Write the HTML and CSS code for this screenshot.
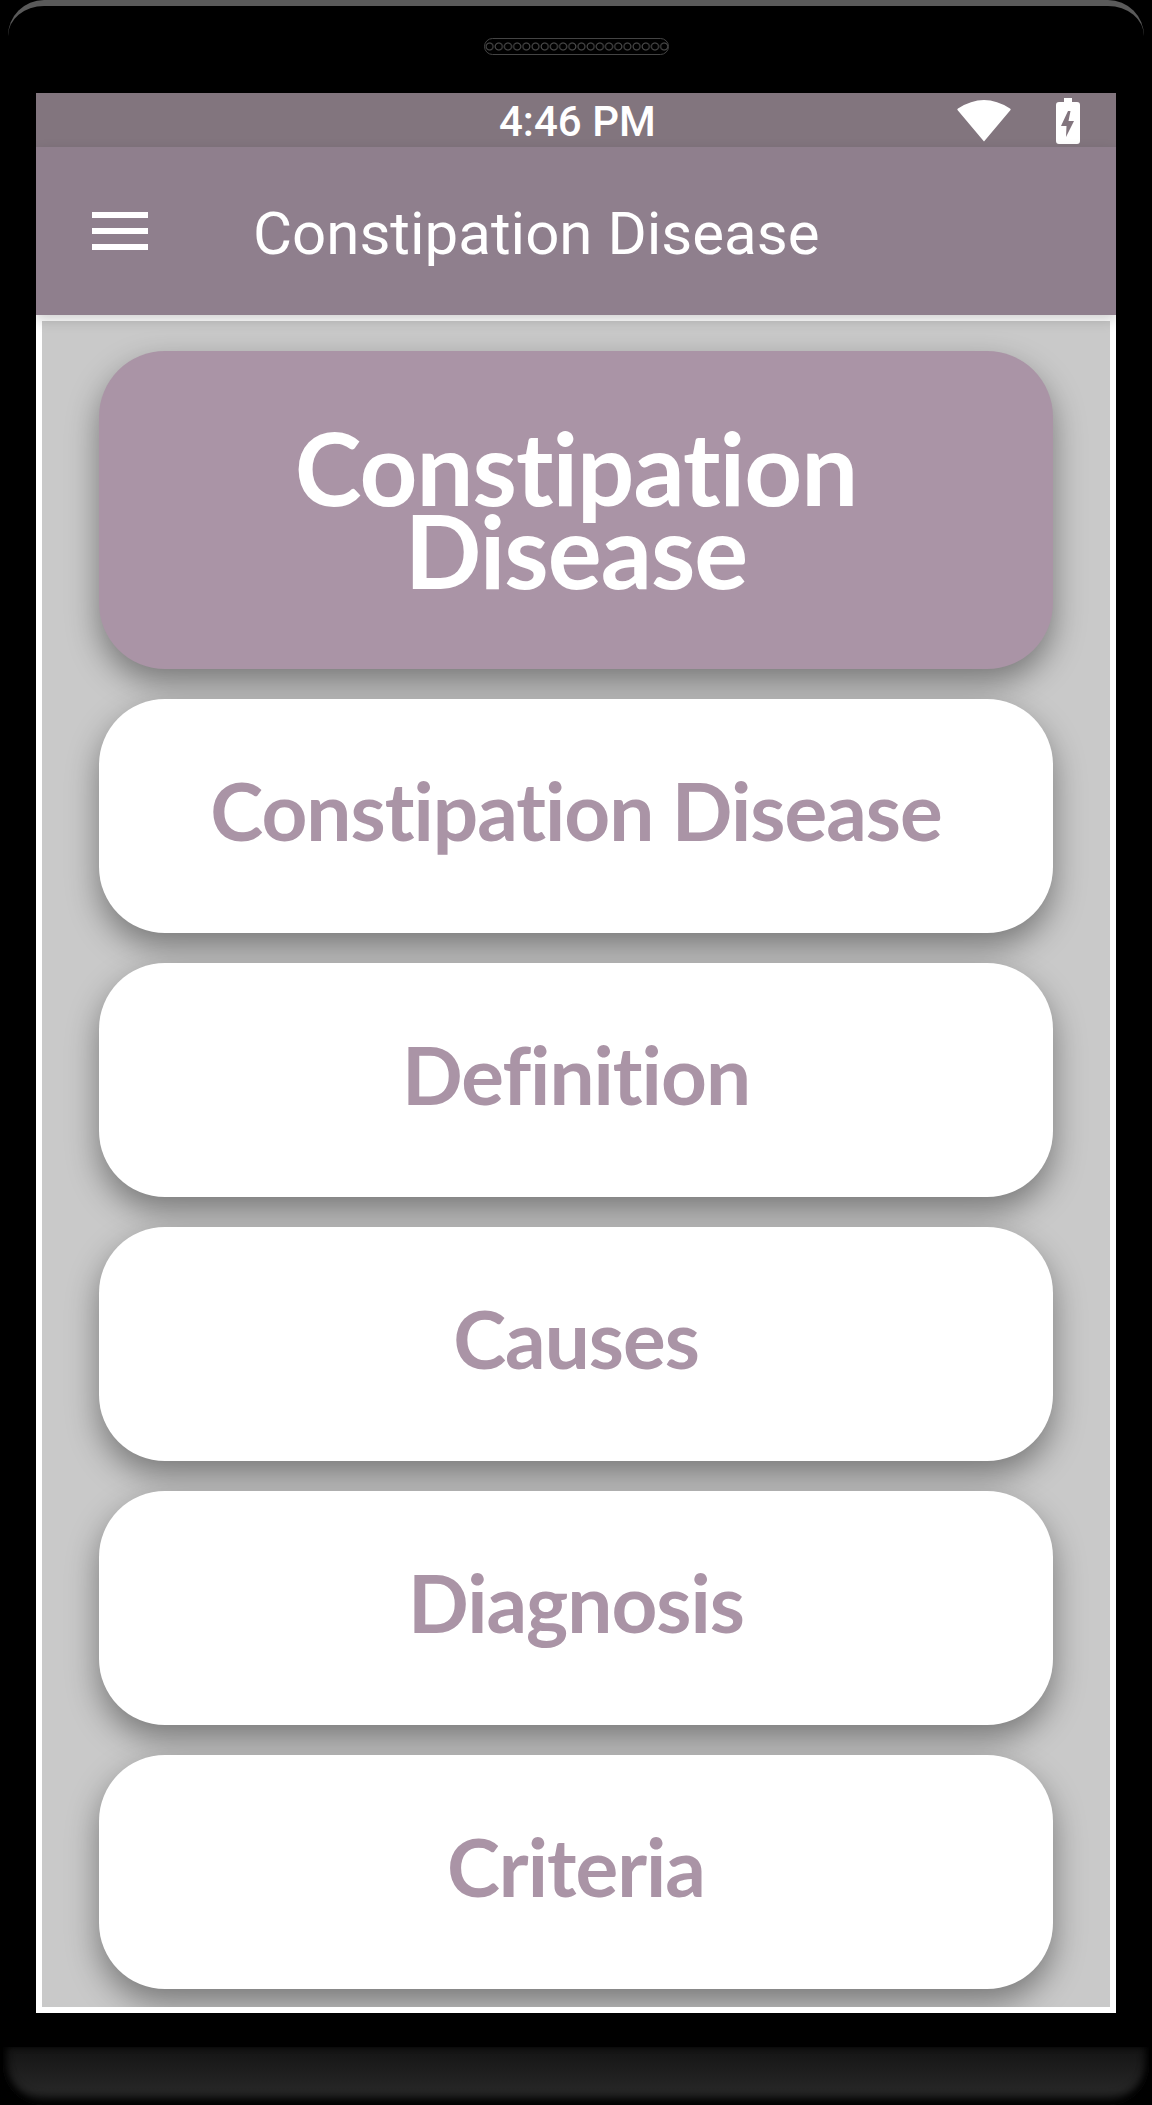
FILE: index.html
```html
<!DOCTYPE html>
<html lang="en">

<head>
    <meta charset="UTF-8">
    <meta name="viewport" content="width=device-width, initial-scale=1.0">
    <title>Constipation Disease</title>
    <link rel="stylesheet" href="styles.css">
</head>

<body>
    <div class="phone">
        <!-- Top bezel with speaker -->
        <div class="bezel-top">
            <div class="speaker"></div>
        </div>

        <div class="screen">
            <div class="status-bar">
                <span class="clock">4:46 PM</span>
                <svg class="wifi" width="54" height="42" viewBox="0 0 54 42">
                    <path d="M27 41.500 L0.500 10 Q0 9 1 8.500 Q27 -8.500 53 8.500 Q54 9 53.500 10 Z" fill="#fff"/>
                </svg>
                <svg class="battery" width="24" height="46" viewBox="0 0 24 46">
                    <path fill-rule="evenodd" fill="#fff" d="M8 0 H16 V4 H21 Q24 4 24 7 V43 Q24 46 21 46 H3 Q0 46 0 43 V7 Q0 4 3 4 H8 Z M12 13 L5 28 H10.500 L10 39 L18 23 H12.500 L14.500 13 Z"/>
                </svg>
            </div>

            <div class="app-bar">
                <div class="menu-icon"><span></span><span></span><span></span></div>
                <div class="app-title">Constipation Disease</div>
            </div>

            <div class="content">
                <div class="card card-main">Constipation<br>Disease</div>
                <div class="card">Constipation Disease</div>
                <div class="card">Definition</div>
                <div class="card">Causes</div>
                <div class="card">Diagnosis</div>
                <div class="card">Criteria</div>
            </div>
        </div>

        <div class="bezel-bottom"></div>
    </div>
</body>

</html>
```

FILE: styles.css
```css
body {
    margin: 0;
    padding: 0;
    background: #000;
    font-family: "Roboto", sans-serif;
}

.phone {
    width: 1152px;
    height: 2105px;
    background: #000;
    display: flex;
    flex-direction: column;
    overflow: hidden;
}

/* Bezel */
.bezel-top {
    height: 93px;
    box-sizing: border-box;
    margin: 0 8px;
    padding-top: 32px;
    border-top: 6px solid #5a5a5a;
    border-radius: 36px 36px 0 0;
    background: #000;
    display: flex;
    justify-content: center;
}

.speaker {
    width: 185px;
    height: 17px;
    box-sizing: border-box;
    border: 1px solid #444;
    border-radius: 9px;
    background-color: #111;
    background-image: radial-gradient(circle at center, #000 0, #000 2.500px, #555 3.500px, #000 4.500px);
    background-size: 9.200px 15px;
}

.screen {
    width: 1080px;
    height: 1920px;
    margin: 0 36px;
    display: flex;
    flex-direction: column;
}

.bezel-bottom {
    margin: 34px 3px 0;
    height: 58px;
    border-radius: 0 0 40px 40px;
    background: linear-gradient(#141414, #262626 75%, #1c1c1c);
    box-shadow: inset 0 -6px 10px #000, inset 6px 0 10px -4px #000, inset -6px 0 10px -4px #000;
}

/* Status bar */
.status-bar {
    height: 54px;
    background: #82757e;
    position: relative;
    flex-shrink: 0;
}

.clock {
    position: absolute;
    left: 463px;
    top: 2px;
    color: #fff;
    font-size: 42px;
    font-weight: 500;
    line-height: 54px;
}

.wifi {
    position: absolute;
    left: 921px;
    top: 7px;
}

.battery {
    position: absolute;
    left: 1020px;
    top: 5px;
}

/* App bar */
.app-bar {
    height: 168px;
    background: #8f7f8d;
    display: flex;
    align-items: center;
    flex-shrink: 0;
    position: relative;
    box-shadow: 0 5px 12px rgba(0, 0, 0, 0.18);
}

.menu-icon {
    width: 56px;
    margin-left: 56px;
    display: flex;
    flex-direction: column;
    gap: 10px;
}

.menu-icon span {
    display: block;
    height: 6px;
    background: #fff;
}

.app-title {
    margin-left: 105px;
    padding-top: 4px;
    color: #fff;
    font-size: 60px;
}

/* Card list */
.content {
    flex: 1;
    border: 6px solid #fff;
    background: #c9c9c9;
    padding: 30px 57px 0;
    display: flex;
    flex-direction: column;
    gap: 30px;
    overflow: hidden;
}

.card {
    height: 234px;
    box-sizing: border-box;
    padding-bottom: 12px;
    flex-shrink: 0;
    background: #fff;
    border-radius: 66px;
    color: #aa94a6;
    font-family: "Lato", sans-serif;
    font-size: 80px;
    font-weight: 700;
    letter-spacing: -1px;
    font-variant-ligatures: none;
    display: flex;
    align-items: center;
    justify-content: center;
    text-align: center;
    box-shadow: 0 14px 32px rgba(0, 0, 0, 0.4);
}

.card-main {
    height: 318px;
    padding-bottom: 2px;
    background: #aa94a6;
    color: #fff;
    font-size: 101px;
    line-height: 83px;
}
```
